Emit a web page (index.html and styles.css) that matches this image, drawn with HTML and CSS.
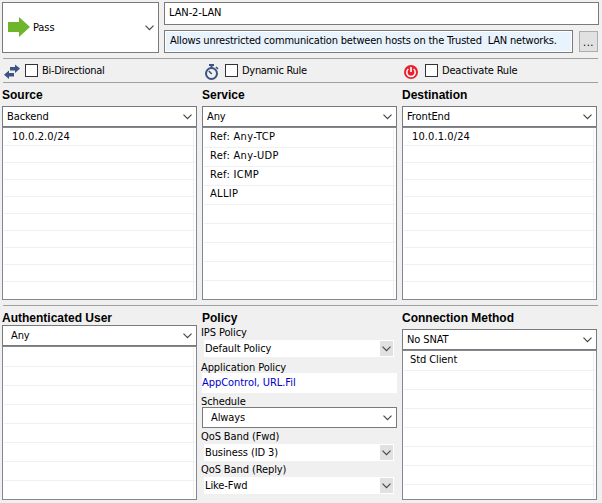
FILE: index.html
```html
<!DOCTYPE html>
<html lang="en">
<head>
<meta charset="utf-8">
<title>Access Rule</title>
<link rel="stylesheet" href="styles.css">
</head>
<body>
<header class="top">
  <div class="action">
    <svg class="arrow" width="23" height="20" viewBox="0 0 23 20"><path fill="#6db52b" d="M0 5h11V0l11 10-11 10v-5H0z"/></svg>
    <span>Pass</span>
    <svg class="chev" width="9" height="6" viewBox="0 0 9 6"><path d="M.5 .7l4 4 4-4"/></svg>
  </div>
  <div class="naming">
    <div class="name">LAN-2-LAN</div>
    <div class="desc-row">
      <div class="desc"><span class="desc-text">Allows unrestricted communication between hosts on the Trusted &nbsp;LAN networks.</span></div>
      <div class="more">...</div>
    </div>
  </div>
</header>
<section class="flags">
  <div class="flag">
    <svg class="flag-icon" width="16" height="16" viewBox="0 0 16 16"><path fill="#3b5580" d="M6 3h5V.5l5 4-5 4.500V6.500H6zM10 12.500H5V15L0 10.700 5 6.500V9h5z"/></svg>
    <i class="box"></i><span class="narrow">Bi-Directional</span>
  </div>
  <div class="flag">
    <svg class="flag-icon" width="16" height="16" viewBox="0 0 16 16"><g fill="none" stroke="#3b5580"><circle cx="7.500" cy="9.500" r="5.500" stroke-width="2"/><path stroke-width="2" d="M5 1h5M7.500 1v3"/><path stroke-width="1.600" d="M12 3l2 2M4.800 7l3 3"/></g></svg>
    <i class="box"></i><span class="narrow">Dynamic Rule</span>
  </div>
  <div class="flag">
    <svg class="flag-icon" width="16" height="16" viewBox="0 0 16 16"><circle cx="7" cy="8" r="7" fill="#e5222d"/><g fill="none" stroke="#fff"><path stroke-width="1.500" d="M4.400 5A4.200 4.200 0 1 0 9.600 5"/><path stroke-width="1.600" d="M7 3v5"/></g></svg>
    <i class="box"></i><span>Deactivate Rule</span>
  </div>
</section>
<section class="columns upper">
  <div class="col">
    <h2>Source</h2>
    <div class="select">Backend<svg class="chev" width="9" height="6" viewBox="0 0 9 6"><path d="M.5 .7l4 4 4-4"/></svg></div>
    <div class="list tight"><ul><li>10.0.2.0/24</li></ul></div>
  </div>
  <div class="col">
    <h2>Service</h2>
    <div class="select">Any<svg class="chev" width="9" height="6" viewBox="0 0 9 6"><path d="M.5 .7l4 4 4-4"/></svg></div>
    <div class="list refs"><ul><li>Ref: Any-TCP</li><li>Ref: Any-UDP</li><li>Ref: ICMP</li><li>ALLIP</li></ul></div>
  </div>
  <div class="col">
    <h2>Destination</h2>
    <div class="select">FrontEnd<svg class="chev" width="9" height="6" viewBox="0 0 9 6"><path d="M.5 .7l4 4 4-4"/></svg></div>
    <div class="list tight"><ul><li>10.0.1.0/24</li></ul></div>
  </div>
</section>
<section class="columns lower">
  <div class="col">
    <h2>Authenticated User</h2>
    <div class="select indent">Any<svg class="chev" width="9" height="6" viewBox="0 0 9 6"><path d="M.5 .7l4 4 4-4"/></svg></div>
    <div class="list"><ul></ul></div>
  </div>
  <div class="col policy">
    <h2>Policy</h2>
    <label class="ips">IPS Policy</label>
    <div class="flat">Default Policy<span class="drop"><svg class="chev" width="9" height="6" viewBox="0 0 9 6"><path d="M.5 .7l4 4 4-4"/></svg></span></div>
    <label class="app">Application Policy</label>
    <div class="link">AppControl, URL.Fil</div>
    <label class="sched">Schedule</label>
    <div class="select indent">Always<svg class="chev" width="9" height="6" viewBox="0 0 9 6"><path d="M.5 .7l4 4 4-4"/></svg></div>
    <label class="qos">QoS Band (Fwd)</label>
    <div class="flat">Business (ID 3)<span class="drop"><svg class="chev" width="9" height="6" viewBox="0 0 9 6"><path d="M.5 .7l4 4 4-4"/></svg></span></div>
    <label class="qos">QoS Band (Reply)</label>
    <div class="flat">Like-Fwd<span class="drop"><svg class="chev" width="9" height="6" viewBox="0 0 9 6"><path d="M.5 .7l4 4 4-4"/></svg></span></div>
  </div>
  <div class="col method">
    <h2>Connection Method</h2>
    <div class="select">No SNAT<svg class="chev" width="9" height="6" viewBox="0 0 9 6"><path d="M.5 .7l4 4 4-4"/></svg></div>
    <div class="list"><ul><li>Std Client</li></ul></div>
  </div>
</section>
</body>
</html>
```
FILE: styles.css
```css
* { box-sizing: border-box; }
body {
  margin: 0;
  width: 602px;
  height: 503px;
  overflow: hidden;
  padding: 2px 3px 0 2px;
  background: #f0f0f0;
  color: #000;
  font: 11px/14px "DejaVu Sans Condensed", "Liberation Sans", sans-serif;
  letter-spacing: -0.1px;
  white-space: nowrap;
}
.chev { flex: none; margin-left: auto; fill: none; stroke: #484848; stroke-width: 1.2; }
.top { display: flex; gap: 5px; height: 56px; }
.action {
  width: 157px;
  height: 51px;
  border: 1px solid #7a7a7a;
  background: #fff;
  display: flex;
  align-items: center;
  padding: 0 4px 0 5px;
}
.action .arrow { margin: 0 2px 1px 0; }
.action span { padding-top: 1px; }
.naming { width: 435px; }
.name { height: 23px; border: 1px solid #7a7a7a; background: #fff; padding: 3px 4px; letter-spacing: -0.1px; }
.desc-row { display: flex; margin-top: 5px; gap: 6px; }
.desc { width: 409px; height: 23px; border: 1px solid #7a7a7a; background: #fff; padding: 1px; letter-spacing: -0.2px; }
.desc-text { display: block; height: 19px; background: #e8f3fd; padding: 2px 4px; }
.more {
  width: 19px;
  height: 21px;
  margin-top: 1px;
  border: 1px solid #adadad;
  background: #e1e1e1;
  text-align: center;
  letter-spacing: 0.5px;
  line-height: 22px;
}
.flags {
  display: grid;
  grid-template-columns: 200px 200px 195px;
  height: 25px;
  margin-left: 1px;
  width: 595px;
  border: solid #a0a0a0;
  border-width: 1px 0;
}
.flag { display: flex; align-items: center; letter-spacing: -0.2px; }
.flag span { padding-top: 1px; }
.narrow { letter-spacing: -0.3px; }
.flag-icon { margin: 2px 5px 0 1px; }
.box { width: 13px; height: 13px; border: 1px solid #333; background: #fff; margin-right: 4px; }
.columns { display: grid; grid-template-columns: repeat(3, 195px); gap: 5px; }
.col { display: flex; flex-direction: column; }
h2 {
  margin: 0;
  font: bold 12px/14px "Liberation Sans", Arial, sans-serif;
  letter-spacing: 0;
}
.upper { height: 222px; padding-top: 5px; }
.upper .col { height: 212px; }
.upper h2 { height: 18px; }
.select {
  flex: none;
  height: 21px;
  border: 1px solid #7a7a7a;
  background: #fff;
  display: flex;
  align-items: center;
  padding: 1px 4px 0;
}
.select .chev { margin-bottom: 1px; }
.indent { padding-left: 8px; }
.list {
  flex: 1;
  border: 1px solid #828790;
  background: #fff;
  padding: 1px;
  min-height: 0;
}
.list ul {
  margin: 0;
  padding: 0;
  height: 100%;
  list-style: none;
  background:
    linear-gradient(#f0f0f0, #f0f0f0) 189px 0 / 1px 100% no-repeat,
    repeating-linear-gradient(#fff 0 18px, #f0f0f0 18px 19px);
}
.list li { height: 19px; padding: 0 0 0 6px; line-height: 15px; }
.list.refs { letter-spacing: 0.3px; }
.list.tight ul {
  background:
    linear-gradient(#f0f0f0, #f0f0f0) 189px 0 / 1px 100% no-repeat,
    repeating-linear-gradient(#fff 0 16px, #f0f0f0 16px 17px);
}
.list.tight li { height: 17px; padding-left: 8px; letter-spacing: 0.1px; }
.lower {
  width: 597px;
  height: 195px;
  padding-top: 6px;
  background: linear-gradient(#a0a0a0, #a0a0a0) 1px 0 / 595px 1px no-repeat;
}
.lower h2 { flex: none; height: 14px; }
.lower .method h2 { height: 18px; }
.policy label { flex: none; height: 14px; margin-left: -1px; }
.policy .ips { height: 15px; line-height: 15px; }
.policy .app { margin-top: 3px; height: 13px; line-height: 15px; }
.policy .sched { margin-top: 1px; height: 13px; line-height: 15px; }
.policy .qos { margin-top: 1px; height: 15px; line-height: 16px; }
.flat {
  flex: none;
  height: 17px;
  margin: 0 3px 0 2px;
  background: #fff;
  display: flex;
  align-items: center;
  padding: 0 1px;
}
.drop { margin-left: auto; width: 13px; height: 15px; background: #e1e1e1; display: flex; align-items: center; padding: 0 2px; }
.link { flex: none; height: 20px; background: #fff; color: #0000c8; line-height: 20px; letter-spacing: -0.05px; }
```
